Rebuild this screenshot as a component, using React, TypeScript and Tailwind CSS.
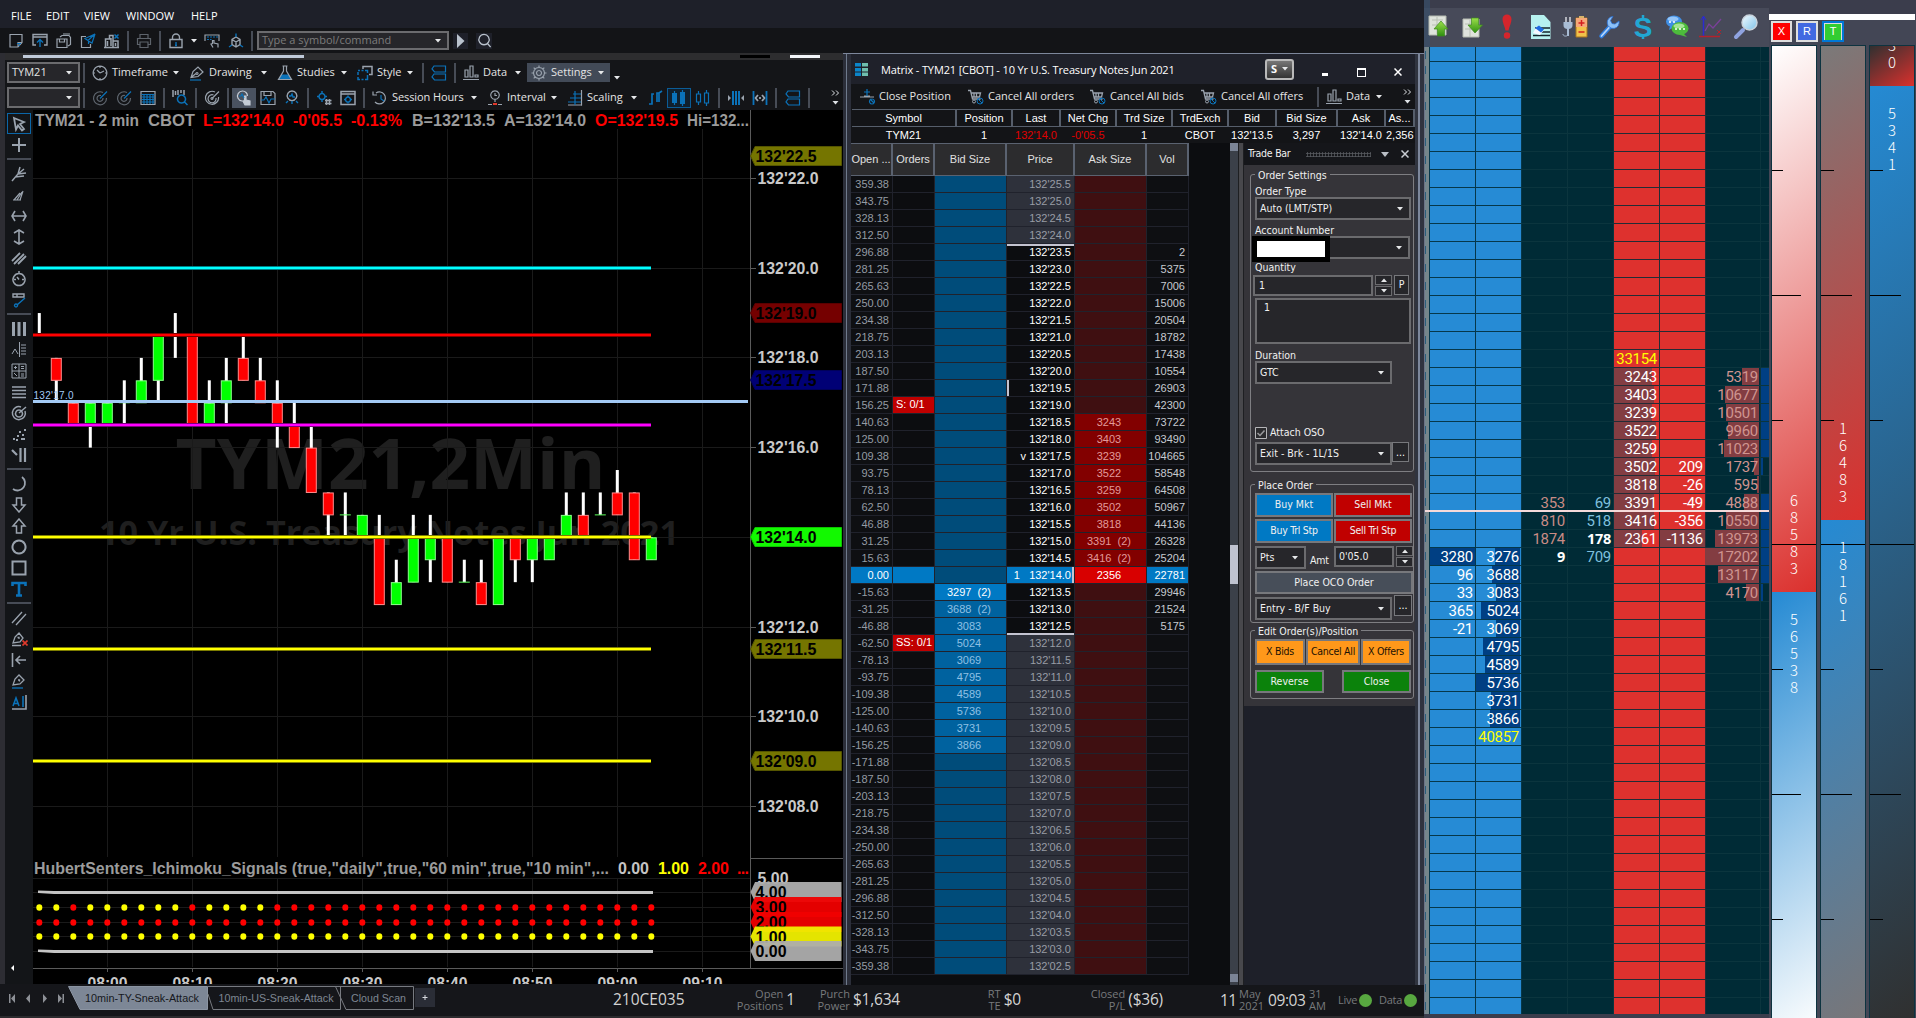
import type { ReactNode } from 'react';
import clsx from 'clsx';

const GRAY = '#9aa3ae';
const BLUE = '#0b72b9';

type IcoProps = { g?: string; b?: string; f?: string; ff?: string; s?: number; w?: number; c?: string };

// g = gray strokes, b = blue strokes, f = blue fill, ff = gray fill
const Ico = ({ g, b, f, ff, s = 16, w = 1.2, c = GRAY }: IcoProps) => (
  <svg width={s} height={s} viewBox="0 0 16 16" fill="none" strokeWidth={w} className="shrink-0">
    {ff && <path d={ff} fill={c} />}
    {f && <path d={f} fill={BLUE} />}
    {g && <path d={g} stroke={c} />}
    {b && <path d={b} stroke={BLUE} />}
  </svg>
);

const icons: Record<string, IcoProps> = {
  newDoc: { g: 'M2 1.500h12v8l-4 4.500H2z M14 9.500h-4v4', b: 'M9 10.500h4 M10.500 12.500h1.500' },
  open: { g: 'M4 12H1V1.500h14V12h-3 M1 4h14', b: 'M8 14V7 M5 9.500L8 6.500l3 3', w: 1.4 },
  saveAll: { g: 'M1 6h10v8.500H1z M3.500 6v3h5V6 M4 4l2-1.500h7l1.500 2v7L12 13 M7 1h7' },
  send: { g: 'M6 3.500H1.500v11h9V11', b: 'M15 1L5 5.500l3 2L15 1l-3 9-3.500-2v3' },
  building: { g: 'M1.500 14V6h4V2.500H9V14 M9 8h5v6 M0 14.500h15 M3.500 8v5 M7 5v8 M11.500 10v3', b: 'M10.500 1.500l4 4 M14.500 1.500l-4 4', w: 1.5 },
  print: { g: 'M4 5V1.500h8V5 M3.500 11.500h-2V5.500h13v6h-2 M4 9h8v5.500H4z', c: '#5d636b' },
  lock: { g: 'M2 6.500h12v8H2z M4.500 6.500V4.500a3.500 3.500 0 0 1 7 0v2', b: 'M8 9v1 M7 12.500h2 M8 9.500v3', w: 1.4 },
  keyboard: { g: 'M1 8V2h14v6 M9 14.500L7 11l1.500-.5V7.500h1.500V10l4 1v3.500', b: 'M3 4h2 M6 4h2 M9 4h2 M12 4h2 M3 6.500h2 M6 6.500h1.500' },
  cube: { g: 'M8 4l4 2.500v5L8 14l-4-2.500v-5z M4 6.500l4 2.500 4-2.500 M8 9v5', b: 'M8 4V0.500 M4 12l-3 2 M12 12l3 2', w: 1.4 },
  search: { g: 'M7.500 1.500a5.500 5.500 0 1 0 .01 0 M11.500 11.500l3 3.500', c: '#b9c2cd' },
  clock: { g: 'M8 1.200a6.800 6.800 0 1 0 .01 0 M8 8L5 5 M8 8l4-2 M8 1v2 M8 13v2 M1 8h2 M13 8h2' },
  pen: { g: 'M2 12.500L4 6.500 9 2l5 5-5 4.500z M8 7.500a1 1 0 1 0 .01 0 M2 12.500l5-4', b: 'M1 15h11' },
  flask: { g: 'M5.500 1h5 M6.500 1v5L1.500 14.500h13L9.500 6V1', f: 'M4.500 9.500h7l3 5h-13z' },
  style: { g: 'M6 4V1.500h9v8h-3', b: 'M1 5.500h2 M4.500 5.500h2 M8 5.500h2.500V8 M10.500 10v4.500H8 M6.500 14.500h-2 M3 14.500H1V12 M1 10V7', w: 1.5 },
  layers: { b: 'M3 1h11.500v6H3.500L1 4z M3 9h11.500v6H3.500L1 12z' },
  bars: { g: 'M2 5h3v7H2z M7 1h3v11H7z M12 10h3v2h-3z M0 14.500h16' },
  gear: { g: 'M8 5.500a2.500 2.500 0 1 0 .01 0 M8 2.500a5.500 5.500 0 1 0 .01 0 M8 .5v2 M8 13.500v2 M.5 8h2 M13.500 8h2 M2.700 2.700l1.500 1.500 M11.800 11.800l1.500 1.500 M13.300 2.700l-1.500 1.500 M2.700 13.300l1.500-1.500' },
  radar: { g: 'M11 2.500A6.500 6.500 0 1 0 14.500 8 M9 5.500A3 3 0 1 0 11 8', b: 'M8 8.500l7-7', c: '#5f666f' },
  table: { g: 'M1 1.500h14v13H1z', b: 'M1.500 4.500h13 M1.500 7h13 M1.500 9.500h13 M1.500 12h13 M4 4v10 M7 4v10 M10 4v10 M13 4v10' },
  barSearch: { g: 'M1 0v7 M3.500 1v4 M6 0v5 M9 0v3 M12 0v5', b: 'M9.500 5a4 4 0 1 0 .01 0 M12.500 12l3 3', w: 1.5 },
  target: { g: 'M11 2A6.500 6.500 0 1 0 14.500 7 M9.500 5A4 4 0 1 0 12 8 M8 8.500l7-7 M8 7.500a1 1 0 1 0 .01 0' },
  pointer: { g: 'M6.500 1a5 5 0 1 0 4 8 M11.500 6A5 5 0 0 0 6.500 1 M9 15l-2-4 1.500-.5V6h1.500v4l4 1v4z', ff: 'M9 15l-2-4 1.500-.5V6h1.500v4l4 1v4z', b: 'M3 6h2l1-2 2 4', c: '#c4ccd6' },
  diskWave: { g: 'M1 1.500h12l2 2v11H1z M4 1.500v4h7v-4', b: 'M1 10h3l2-3 3 6 2-4h4' },
  head: { g: 'M8 1a4.800 4.800 0 1 0 .01 0', b: 'M5 6h2l1-2 1 3h2 M4 11l-2 2 M12 11l2 2 M8 11v3', w: 1.4 },
  gearHash: { b: 'M6 3.500a3 3 0 1 0 .01 0 M6 1v2 M6 10v2 M1 6.500h2 M9 6.500h2', g: 'M10.500 9v6 M13.500 9v6 M9 10.500h6.500 M9 13.500h6.500', w: 1.5 },
  windowGear: { g: 'M1 1.500h14v13H1z M1 4h14', b: 'M8 7a2.500 2.500 0 1 0 .01 0 M8 5.500v2 M8 11.500v2 M4 9.500h2 M10 9.500h2', w: 1.5 },
  history: { g: 'M4 3a6 6 0 1 1-1 9 M1 1.500v3.500h4', b: 'M9 5v4l3 2' },
  interval: { g: 'M8 .8a4.300 4.300 0 1 0 .01 0 M8 3v2.500h2 M8 9.500V12 M1 14.500h4 M11 14.500h4' },
  scaling: { g: 'M14.500 0v15.500', b: 'M6 4h8 M3 8h11 M1 12h13 M8 1v14', ff: 'M1 14.500h14v1H1z' },
  notes: { b: 'M2 14h3V4h2 M10 12V3h2v9 M12 3l3-2', w: 1.7 },
  candles: { f: 'M1 3h5v10H1z M9 2h5v12H9z', b: 'M3.500 1v14 M11.500 0v16' },
  hollow: { b: 'M1.500 4h4v8h-4z M9.500 3h4v10h-4z M3.500 1v3 M3.500 12v3 M11.500 0v3 M11.500 13v3' },
  squeeze: { b: 'M5 1v14 M8 1v14 M11 1v14', ff: 'M0 5l3 3-3 3z M16 5l-3 3 3 3z', w: 2 },
  spread: { b: 'M1.500 1v14 M14.500 1v14', g: 'M6 5L3.500 8 6 11 M10 5l2.500 3-2.500 3 M8 7v2', w: 1.8 },
};

const sideIcons: (IcoProps | 'sep')[] = [
  { g: 'M3 2l10 4-4 2 4 5-2 1.500-4-5-2 4z', w: 1.8 },
  { g: 'M8 1v14 M1 8h14', w: 2 },
  'sep',
  { g: 'M1 15L7 8 9 1 M7 8l6-5 M7 8l8-1 M4 11l9-1', w: 1.5 },
  { g: 'M3 13L9 6 M6 13l5-8 M9 13l3-9 M2 13h8' },
  { g: 'M4 3L1 8l3 5 M12 3l3 5-3 5 M1 8h14', w: 1.6 },
  { g: 'M3 4l5-3 5 3 M3 12l5 3 5-3 M8 1v14', w: 1.6 },
  { g: 'M1 11L9 3 M3 14L13 4 M7 14l8-8', w: 1.8 },
  { g: 'M8 2.500a6 6 0 1 0 .01 0 M8 8.500L6 6 M8 0v2 M3 8.500h2 M11 8.500h2', w: 1.5 },
  { g: 'M2 2h11v3H2z M6 2v3', b: 'M14 6L6 13 M5 12a1.500 1.500 0 1 0 .01 0', w: 1.4 },
  'sep',
  { ff: 'M1 1h3v14H1z M6.500 1h3v14h-3z M12 1h3v14h-3z' },
  { g: 'M1 12l3-5 3 5 M8.500 0v15 M10 3h5 M10 6h5 M10 9h5 M10 12h5', w: 1 },
  { g: 'M1 1h14v14H1z M8 1v14 M1 8h14 M3 4.500h3 M4.500 3v3 M10 3.500h3 M10 5.500h3 M3 10l3 3 M10 11h3 M10 13h3', w: 1 },
  { g: 'M1 3h14 M1 6.500h14 M1 10h14 M1 13.500h14', w: 1.6 },
  { g: 'M10 2A6.500 6.500 0 1 0 14 6 M8 5a3.500 3.500 0 1 0 .01 0 M8 8l7-6', w: 1.5 },
  { ff: 'M2 12h2v2H2z M6 9h2v2H6z M5 13h2v2H5z M10 12h2v2h-2z M11 8h2v2h-2z M8 5h2v2H8z M13 3h2v2h-2z M12 12h2v2h-2z' },
  { g: 'M1 3l5 5 M9.500 1v14 M14 1v14', w: 2.2 },
  'sep',
  { g: 'M11 1a7 7 0 0 1-9 12', w: 1.8 },
  { g: 'M5.500 1h5v7H14l-6 7-6-7h3.500z', w: 1.5 },
  { g: 'M5.500 15h5V8H14L8 1 2 8h3.500z', w: 1.5 },
  { g: 'M8 1.500a6.500 6.500 0 1 0 .01 0', w: 2 },
  { g: 'M1.500 1.500h13v13h-13z', w: 2 },
  { b: 'M1.500 5V2h13v3 M8 2v12 M5 14.500h6', w: 2.6 },
  'sep',
  { g: 'M1 13L11 2 M5 15L15 4', w: 1.3 },
  { g: 'M2 12l2-6 4-4 4 5-3 4z M6.500 6.500h1.500v1.500 M1 14.500h9', w: 1.3 },
  { g: 'M1.500 1v14 M5 8h10 M9 4L5 8l4 4', w: 1.6 },
  { g: 'M2 12l2-6 4-4 5 5-4 4z M7 7h1.500v1.500', b: 'M1 15h11', w: 1.3 },
  { g: 'M1 15h14V1', b: 'M2 12L5 4l3 8 M3 9.500h4 M12 2v11', w: 1.6 },
];

// index of the tool that carries a red delete mark
const REMOVE_TOOL = 27;

const Caret = ({ className = '' }: { className?: string }) => (
  <svg width="6" height="4" viewBox="0 0 6 4" className={clsx('shrink-0', className)}>
    <path d="M0 0h6L3 3.500z" fill="#e6e8ea" />
  </svg>
);

const Sep = () => (
  <div className="flex w-2 shrink-0 justify-center">
    <div className="h-5 w-[2px] bg-[#474c56]" />
  </div>
);

const IconCell = ({ name, className = '' }: { name: string; className?: string }) => (
  <div className={clsx('flex h-5 w-6 shrink-0 items-center justify-center', className)}>
    <Ico {...icons[name]} />
  </div>
);

const MenuButton = ({ name, label, className }: { name: string; label: string; className: string }) => (
  <div className={clsx('flex h-[19px] shrink-0 items-center', className)}>
    <IconCell name={name} />
    <span className="grow whitespace-nowrap">{label}</span>
    <Caret className="mr-[6px]" />
  </div>
);

const Combo = ({ children, className }: { children?: ReactNode; className: string }) => (
  <div className={clsx('flex shrink-0 items-center justify-between border-2 border-[#6b6b6e] bg-[#26262a] pr-[6px] pl-[3px] whitespace-nowrap', className)}>
    <span>{children}</span>
    <Caret />
  </div>
);

const TopBar = () => (
  <div className="h-[54px] w-[1424px] bg-[#131417]">
    <div className="flex h-7 items-end bg-[#1e2029] pb-[3px] pl-[11px] font-['Open_Sans'] text-[11px] leading-[18px] text-white">
      <span className="w-[35px]">FILE</span>
      <span className="w-[38px]">EDIT</span>
      <span className="w-[42px]">VIEW</span>
      <span className="w-[65px]">WINDOW</span>
      <span>HELP</span>
    </div>
    <div className="flex h-[25px] items-center pl-1">
      {['newDoc', 'open', 'saveAll', 'send', 'building'].map((n) => (
        <IconCell key={n} name={n} />
      ))}
      <Sep />
      <IconCell name="print" />
      <Sep />
      <IconCell name="lock" />
      <Caret className="mx-[3px]" />
      <IconCell name="keyboard" />
      <IconCell name="cube" />
      <Sep />
      <Combo className="ml-px h-[19px] w-[192px] font-['Open_Sans'] text-[11px] text-[#7c7c7c]">Type a symbol/command</Combo>
      <div className="ml-1 flex h-4 w-[15px] items-center justify-center bg-[#1e2029]">
        <svg width="8" height="14" viewBox="0 0 8 14">
          <path d="M0 0l7.500 7L0 14z" fill="#b9c2cd" />
        </svg>
      </div>
      <div className="ml-2 flex h-4 w-4 items-center justify-center bg-[#1e2029]">
        <Ico {...icons.search} s={15} w={1.4} />
      </div>
    </div>
  </div>
);

const Overflow = ({ className = '' }: { className?: string }) => (
  <svg width="9" height="17" viewBox="0 0 9 17" className={className}>
    <path d="M1 1.500l2.500 2.500L1 6.500 M5 1.500l2.500 2.500L5 6.500" stroke="#dfe2e6" fill="none" />
    <path d="M1.500 12h6l-3 3.500z" fill="#dfe2e6" />
  </svg>
);

const ChartToolbars = () => (
  <div className="h-[50px] bg-[#141518] pl-[2px] font-['Open_Sans'] text-[11px] text-[#e4e4e4]">
    <div className="flex h-[25px] items-center">
      <Combo className="h-[21px] w-[73px]">TYM21</Combo>
      <Sep />
      <MenuButton name="clock" label="Timeframe" className="w-[97px]" />
      <MenuButton name="pen" label="Drawing" className="w-[88px]" />
      <MenuButton name="flask" label="Studies" className="w-[80px]" />
      <MenuButton name="style" label="Style" className="w-[66px]" />
      <Sep />
      <IconCell name="layers" />
      <Sep />
      <MenuButton name="bars" label="Data" className="w-[68px]" />
      <MenuButton name="gear" label="Settings" className="w-[83px] bg-[#424a57]" />
      <Caret className="mt-[10px] ml-1" />
    </div>
    <div className="flex h-[25px] items-center">
      <Combo className="h-[21px] w-[73px]" />
      <Sep />
      <IconCell name="radar" />
      <IconCell name="radar" />
      <IconCell name="table" />
      <Sep />
      <IconCell name="barSearch" />
      <Sep />
      <IconCell name="target" />
      <Sep />
      <IconCell name="pointer" className="bg-[#4a5260]" />
      <IconCell name="diskWave" />
      <IconCell name="head" />
      <Sep />
      <IconCell name="gearHash" />
      <IconCell name="windowGear" />
      <Sep />
      <MenuButton name="history" label="Session Hours" className="w-[115px] tracking-[-0.1px]" />
      <div className="relative">
        <MenuButton name="interval" label="Interval" className="w-[80px]" />
        <div className="absolute top-[15px] left-[10px] h-[2px] w-1 bg-[#e0392b]" />
      </div>
      <MenuButton name="scaling" label="Scaling" className="w-[80px]" />
      <IconCell name="notes" />
      <IconCell name="candles" className="border border-[#0b5c96] bg-[#10202e]" />
      <IconCell name="hollow" />
      <Sep />
      <IconCell name="squeeze" className="ml-px" />
      <IconCell name="spread" />
      <Sep />
      <IconCell name="layers" className="ml-px" />
      <Sep />
      <Overflow className="ml-[18px]" />
    </div>
  </div>
);

const SideTools = () => (
  <div className="flex w-7 shrink-0 flex-col items-center bg-[#131518] pt-[3px]">
    {sideIcons.map((ic, i) =>
      ic === 'sep' ? (
        <div key={i} className="my-[3px] h-[2px] w-6 shrink-0 bg-[#474c56]" />
      ) : (
        <div key={i} className={clsx('relative flex h-[21px] w-6 shrink-0 items-center justify-center', i === 0 && 'border border-[#0b66a8]')}>
          <Ico {...ic} />
          {i === REMOVE_TOOL && (
            <svg width="6" height="6" viewBox="0 0 6 6" className="absolute right-[3px] bottom-[3px]">
              <path d="M.5.5l5 5M5.500.5l-5 5" stroke="#e0392b" strokeWidth="1.600" />
            </svg>
          )}
        </div>
      ),
    )}
    <svg width="4" height="6" className="mt-auto mr-[13px] mb-[13px]">
      <path d="M3 0v6L0 3z" fill="#fff" />
    </svg>
  </div>
);

// body top, body bottom, wick high, wick low (32nds above 132), rising
const candles: [number, number, number, number, boolean][] = [
  [18.5, 18.5, 19, 18.5, false],
  [18, 17.5, 18, 17, false],
  [17, 16.5, 17, 16.5, false],
  [17, 16.5, 17, 16, true],
  [17, 16.5, 17, 16.5, true],
  [17, 17, 17.5, 16.5, true],
  [17.5, 17, 18, 17, true],
  [18.5, 17.5, 18.5, 17, true],
  [18.5, 18.5, 19, 18, true],
  [18.5, 16.5, 18.5, 16.5, false],
  [17, 16.5, 17.5, 16.5, true],
  [17.5, 17, 18, 16.5, true],
  [18, 17.5, 18.5, 17.5, false],
  [17.5, 17, 18, 17, false],
  [17, 16.5, 17.5, 16, false],
  [16.5, 16, 17, 16, false],
  [16, 15, 16.5, 15, false],
  [15, 14.5, 15, 14, false],
  [14.5, 14.5, 15, 14, true],
  [14.5, 14, 14.5, 14, true],
  [14, 12.5, 14.5, 12.5, false],
  [13, 12.5, 13.5, 12.5, true],
  [14, 13, 14.5, 13, true],
  [14, 13.5, 14.5, 13, true],
  [14, 13, 14, 13, false],
  [13, 13, 13.5, 13, true],
  [13, 12.5, 13.5, 12.5, false],
  [14, 12.5, 14, 12.5, true],
  [14, 13.5, 14, 13, false],
  [14, 13.5, 14, 13, true],
  [14, 13.5, 14, 13.5, true],
  [14.5, 14, 15, 14, true],
  [14.5, 14, 15, 14, false],
  [14.5, 14.5, 15, 14.5, true],
  [15, 14.5, 15.5, 14.5, false],
  [15, 13.5, 15, 13.5, false],
  [14, 13.5, 14, 13.5, true],
];

const py = (p: number) => 178.5 + (22 - p) * 44.85;
const cx = (i: number) => 39.3 + i * 17;
const fmt = (p: number) => `132'${p.toFixed(1).padStart(4, '0')}`;

const levels: [number, string, string][] = [
  [268, '#00ffff', '#007f86'],
  [335, '#ff0000', '#7d0000'],
  [425, '#ff00ff', '#7d007d'],
  [537, '#ffff00', '#7d7d00'],
  [649, '#ffff00', '#7d7d00'],
  [761, '#ffff00', '#7d7d00'],
];

const tags: [number, string, string, string][] = [
  [156, '#757500', '#555500', fmt(22.5)],
  [313, '#750000', '#5a0000', fmt(19)],
  [380, '#000075', '#00005a', fmt(17.5)],
  [537, '#12f900', '#0dc400', fmt(14)],
  [649, '#757500', '#555500', fmt(11.5)],
  [761, '#757500', '#555500', fmt(9)],
];

const lowTags: [number, string, string][] = [
  [892, '#adadad', '4.00'],
  [907, '#f00000', '3.00'],
  [922, '#f00000', '2.00'],
  [936.5, '#f0f000', '1.00'],
  [951, '#adadad', '0.00'],
];

const headerParts: [number, number, string, string][] = [
  [35, 104, '#9b9b9b', 'TYM21 - 2 min'],
  [148, 47, '#9b9b9b', 'CBOT'],
  [203, 81, '#ff0000', "L=132'14.0"],
  [293, 49, '#ff0000', "-0'05.5"],
  [351, 51, '#ff0000', '-0.13%'],
  [412, 83, '#9b9b9b', "B=132'13.5"],
  [504, 82, '#9b9b9b', "A=132'14.0"],
  [595, 83, '#ff0000', "O=132'19.5"],
  [687, 62, '#9b9b9b', 'Hi=132...'],
];

const times = ['08:00', '08:10', '08:20', '08:30', '08:40', '08:50', '09:00', '09:10'];

const Chart = () => (
  <svg width="810" height="874" viewBox="33 110 810 874" className="block bg-black" fontFamily="'Liberation Sans', Arial, sans-serif">
    <g fontFamily="'Open Sans', 'Noto Sans', sans-serif" fontWeight="700" fill="#1f1f1f">
      <text x="175.500" y="489" fontSize="70" textLength="430" lengthAdjust="spacingAndGlyphs">TYM21,2Min</text>
      <text x="99" y="545" fontSize="34" textLength="580" lengthAdjust="spacingAndGlyphs">10 Yr U.S. Treasury Notes Jun 2021</text>
    </g>
    <g stroke="#1a1a1a" shapeRendering="crispEdges">
      {times.map((t, i) => (
        <path key={t} d={`M${107.5 + i * 85} 129V857 M${107.5 + i * 85} 878V967`} />
      ))}
      {[22, 20, 18, 16, 14, 12, 10, 8].map((p) => (
        <path key={p} d={`M33 ${py(p)}H750`} />
      ))}
      {[878.5, 892.5, 907.5, 922.5, 936.5, 951.5].map((y) => (
        <path key={y} d={`M33 ${y}H750`} />
      ))}
    </g>
    {candles.map(([top, bottom, hi, lo, up], i) => (
      <g key={i}>
        {hi !== lo && <rect x={cx(i) - 1.5} y={py(hi)} width="3" height={py(lo) - py(hi)} fill="#fff" />}
        {top === bottom ? (
          <rect x={cx(i) - 5.5} y={py(top) - 0.5} width="11" height="1" fill={up ? '#5dff5d' : '#ff0000'} />
        ) : (
          <rect
            x={cx(i) - 5}
            y={py(top) + 0.5}
            width="10"
            height={py(bottom) - py(top) - 0.5}
            fill={up ? '#00ff00' : '#ff0000'}
            stroke={up ? '#8dff8d' : '#ff8d8d'}
          />
        )}
      </g>
    ))}
    {levels.map(([y, color, edge]) => (
      <g key={y}>
        <rect x="33" y={y - 2} width="618" height="4" fill={edge} />
        <rect x="33" y={y - 1} width="618" height="2" fill={color} />
      </g>
    ))}
    <rect x="33" y="400" width="715" height="3" fill="#a3caf5" />
    <text x="33.500" y="398.500" fontSize="10" textLength="40" fill="#a3caf5">132'17.0</text>

    <g fontWeight="700" fontSize="16">
      {headerParts.map(([x, w, color, text]) => (
        <text key={x} x={x} y="126" textLength={w} lengthAdjust="spacingAndGlyphs" fill={color}>{text}</text>
      ))}
      <text x="34" y="874" textLength="575" lengthAdjust="spacingAndGlyphs" fill="#9b9b9b">{'HubertSenters_Ichimoku_Signals (true,"daily",true,"60 min",true,"10 min",...'}</text>
      <text x="618" y="874" textLength="31" fill="#c4c4c4">0.00</text>
      <text x="658" y="874" textLength="31" fill="#ffff00">1.00</text>
      <text x="698" y="874" textLength="31" fill="#ff0000">2.00</text>
      <text x="737" y="874" textLength="12" fill="#ff0000">...</text>
    </g>

    {candles.map((_, i) => (
      <g key={i}>
        <ellipse cx={cx(i)} cy="907.500" rx="3" ry="3.200" fill={i < 14 && i !== 2 && i !== 9 ? '#ffff00' : '#ff0000'} />
        <ellipse cx={cx(i)} cy="922.500" rx="3" ry="3.200" fill="#ff0000" />
        <ellipse cx={cx(i)} cy="936.500" rx="3" ry="3.200" fill="#ffff00" />
      </g>
    ))}
    <path d="M38 890.500l16 .5H653v3H54L38 893z" fill="#c4c4c4" />
    <path d="M38 949.500l16 .5H653v3H54L38 952z" fill="#c4c4c4" />

    <g stroke="#5a5a5a" shapeRendering="crispEdges">
      <path d="M750.500 110V968 M33 968.500H843 M750 858.500H843" />
      {times.map((t, i) => (
        <path key={t} d={`M${107.5 + i * 85} 968v4`} />
      ))}
    </g>
    <g fontWeight="700" fontSize="16" fill="#c9c9c9">
      {times.map((t, i) => (
        <text key={t} x={107.5 + i * 85} y="988.500" textAnchor="middle" textLength="40" lengthAdjust="spacingAndGlyphs">{t}</text>
      ))}
      {[22, 20, 18, 16, 12, 10, 8].map((p) => (
        <g key={p}>
          <path d={`M750 ${py(p)}h6`} stroke="#5a5a5a" shapeRendering="crispEdges" />
          <text x="757.500" y={py(p) + 5.5} textLength="61" lengthAdjust="spacingAndGlyphs">{fmt(p)}</text>
        </g>
      ))}
      <text x="757.500" y="884" textLength="31" lengthAdjust="spacingAndGlyphs">5.00</text>
    </g>
    <g fontWeight="700" fontSize="16" fill="#000">
      {tags.map(([y, fill, edge, text]) => (
        <g key={y}>
          <path d={`M750.5 ${y}L755 ${y - 9.5}H841.5V${y + 9.5}H755z`} fill={fill} stroke={edge} />
          <text x="755.500" y={y + 6} textLength="61" lengthAdjust="spacingAndGlyphs">{text}</text>
        </g>
      ))}
      {lowTags.map(([y, fill, text]) => (
        <g key={y}>
          <path d={`M750.5 ${y}L755 ${y - 10}H841.5V${y + 10}H755z`} fill={fill} fillOpacity="0.95" />
          <text x="755.500" y={y + 6} textLength="31" lengthAdjust="spacingAndGlyphs">{text}</text>
        </g>
      ))}
    </g>
  </svg>
);

const summary: [string, string, string, string?][] = [
  ['Symbol', 'TYM21', 'w-[105px]'],
  ['Position', '1', 'w-[56px]'],
  ['Last', "132'14.0", 'w-[48px]', 'text-[#e00000]'],
  ['Net Chg', "-0'05.5", 'w-[56px]', 'text-[#e00000]'],
  ['Trd Size', '1', 'w-[56px]'],
  ['TrdExch', 'CBOT', 'w-[56px]'],
  ['Bid', "132'13.5", 'w-[48px]'],
  ['Bid Size', '3,297', 'w-[61px]'],
  ['Ask', "132'14.0", 'w-[48px]'],
  ['As...', '2,356', 'w-[29px]'],
];

const vols = [2, 5375, 7006, 15006, 20504, 18782, 17438, 10554, 26903, 42300, 73722, 93490, 104665, 58548, 64508, 50967, 44136, 26328, 25204, 22781, 29946, 21524, 5175];
const asks = ['3243', '3403', '3239', '3522', '3259', '3502', '3818', '3391  (2)', '3416  (2)', '2356'];
const bids = ['3297  (2)', '3688  (2)', '3083', '5024', '3069', '4795', '4589', '5736', '3731', '3866'];

const LADDER_COLS = 'grid grid-cols-[42px_42px_72px_68px_72px_42px]';
const CELL = 'border-r border-b border-[#20222c]';

const LadderRow = ({ i }: { i: number }) => {
  const last = i === 23;
  const inRange = i >= 4 && i <= 26;
  const order = i === 13 ? 'S: 0/1' : i === 27 ? 'SS: 0/1' : '';
  const ask = asks[i - 14];
  const bid = bids[i - 24];
  return (
    <div className={clsx(LADDER_COLS, 'h-[17px] text-[11px] leading-4 whitespace-pre')}>
      <div className={clsx(CELL, 'pr-[3px] text-right', last ? 'bg-[#0079c4] text-white' : 'bg-[#0e0f12] text-[#949ba3]')}>
        {(359.375 - i * 15.625).toFixed(2)}
      </div>
      <div className={clsx(CELL, 'pl-[3px] text-white', order ? 'bg-[#c00000] leading-[14px]' : last ? 'bg-[#0079c4]' : 'bg-[#0c0d10]')}>{order}</div>
      <div
        className={clsx(
          CELL,
          'pr-[3px] text-center',
          i === 24 ? 'bg-[#0079c4] text-white' : bid ? 'bg-[#00629f] text-[#8fc0e4]' : 'bg-[#004c7a]',
        )}
      >
        {bid}
      </div>
      <div
        className={clsx(
          CELL,
          'relative pr-[3px] text-right',
          last ? 'bg-[#0079c4] text-white' : inRange ? 'bg-[#0c0d10] text-white' : 'bg-[#2e313b] text-[#989ca5]',
        )}
      >
        {i === 16 && 'v '}
        {last && '1   '}
        {fmt(25.5 - i * 0.5)}
        {i === 4 && <div className="absolute inset-x-0 top-0 h-[2px] bg-[#c3c3d0]" />}
        {i === 26 && <div className="absolute inset-x-0 -bottom-px h-[2px] bg-[#c3c3d0]" />}
        {i === 12 && <div className="absolute inset-y-0 left-0 w-[2px] bg-[#c3c3d0]" />}
        {last && <div className="absolute inset-y-0 right-0 w-[2px] bg-[#c3c3d0]" />}
      </div>
      <div className={clsx(CELL, 'pr-[3px] text-center', last ? 'bg-[#d80000] text-white' : ask ? 'bg-[#820000] text-[#e39a9a]' : 'bg-[#3f0f11]')}>{ask}</div>
      <div className={clsx(CELL, 'pr-[3px] text-right', last ? 'bg-[#0079c4] text-white' : 'bg-[#0e0f12] text-[#c6cad0]')}>{vols[i - 4]}</div>
    </div>
  );
};

const Ladder = () => (
  <div className="w-[379px] bg-[#0c0d10] font-['Liberation_Sans']">
    <div className={clsx(LADDER_COLS, 'h-[33px] w-[338px] border-t border-l border-[#5a6270] text-[11px] text-[#e0e0e0]')}>
      {['Open ...', 'Orders', 'Bid Size', 'Price', 'Ask Size', 'Vol'].map((h) => (
        <div key={h} className="-ml-px mr-px flex items-center justify-center border-r-2 border-b border-[#5a6270] bg-[#2c2c2e] pb-px whitespace-nowrap">
          {h}
        </div>
      ))}
    </div>
    {Array.from({ length: 47 }, (_, i) => (
      <LadderRow key={i} i={i} />
    ))}
  </div>
);

const Group = ({ title, className, children }: { title: string; className: string; children: ReactNode }) => (
  <div className={clsx('relative w-[164px] rounded-[3px] border border-[#7e7e82] pl-1', className)}>
    <span className="absolute -top-[7px] left-[4px] bg-[#353439] px-[3px] leading-[15px]">{title}</span>
    {children}
  </div>
);

const Spinner = ({ className }: { className: string }) => (
  <div className={clsx('flex w-[17px] flex-col gap-px', className)}>
    <div className="flex h-[10px] items-center justify-center border border-[#6b6b6e] bg-[#26262a]">
      <Caret className="rotate-180" />
    </div>
    <div className="flex h-[10px] items-center justify-center border border-[#6b6b6e] bg-[#26262a]">
      <Caret />
    </div>
  </div>
);

const btn = 'flex items-center justify-center border-2 border-[#77787c] whitespace-nowrap';
const label = 'h-3 leading-[12px]';
const field = 'border-2 border-[#6b6b6e] bg-[#26262a]';

const Dots = ({ className }: { className: string }) => (
  <div className={clsx('flex items-center justify-center border border-[#77787c] bg-[#26262a] pt-px text-white', className)}>...</div>
);

const TradeBar = () => (
  <div className="w-[171px] bg-[#1e2029] font-['DejaVu_Sans_Condensed','DejaVu_Sans'] text-[10.5px] text-[#f0f0f0]">
    <div className="flex h-[22px] items-center bg-[#15161a] pl-1">
      <span className="w-[58px] tracking-tight">Trade Bar</span>
      <div className="h-[5px] w-[65px] bg-[radial-gradient(#55585d_45%,transparent_55%)] bg-[length:3px_3px]" />
      <svg width="8" height="5" className="ml-[10px]">
        <path d="M0 0h8L4 5z" fill="#b9bec5" />
      </svg>
      <svg width="8" height="8" viewBox="0 0 8 8" className="ml-3">
        <path d="M.5.5l7 7M7.500.5l-7 7" stroke="#c8ccd2" strokeWidth="1.500" />
      </svg>
    </div>
    <div className="h-[541px] bg-[#353439] pt-[9px] pl-[6px]">
      <Group title="Order Settings" className="h-[298px] pt-[10px]">
        <div className={label}>Order Type</div>
        <Combo className="h-[23px] w-[156px]">Auto (LMT/STP)</Combo>
        <div className={clsx(label, 'mt-1')}>Account Number</div>
        <div className="-ml-[3px] flex h-[23px]">
          <div className="z-10 h-[26px] w-[78px] shrink-0 border-[5px] border-black bg-white" />
          <Combo className="-ml-[2px] h-[23px] w-[82px]" />
        </div>
        <div className={clsx(label, 'mt-[2px]')}>Quantity</div>
        <div className="mt-[2px] -ml-[2px] flex h-[21px] gap-[2px]">
          <div className={clsx(field, 'h-[21px] w-[120px] pl-1 leading-[17px]')}>1</div>
          <Spinner className="" />
          <div className="flex h-5 w-[15px] items-center justify-center border border-[#77787c] bg-[#26262a]">P</div>
        </div>
        <div className={clsx(field, 'mt-[2px] h-[46px] w-[156px] pl-[7px] leading-[14px]')}>1</div>
        <div className={clsx(label, 'mt-[5px]')}>Duration</div>
        <Combo className="h-[23px] w-[137px]">GTC</Combo>
        <div className="mt-[42px] flex h-[13px] items-center gap-[3px]">
          <svg width="12" height="12" viewBox="0 0 12 12">
            <path d="M.5.5h11v11H.5z" fill="#2b2b2e" stroke="#b5b5b8" />
            <path d="M2.500 6l2.500 2.500L9.500 3.500" fill="none" stroke="#9a9a9d" strokeWidth="1.500" />
          </svg>
          Attach OSO
        </div>
        <div className="mt-[3px] flex">
          <Combo className="h-[23px] w-[137px]">Exit - Brk - 1L/1S</Combo>
          <Dots className="h-5 w-[17px]" />
        </div>
      </Group>
      <Group title="Place Order" className="mt-3 h-[139px] pt-2">
        <div className="grid w-[157px] grid-cols-2 gap-x-px gap-y-[2px]">
          <div className={clsx(btn, 'h-6 bg-[#0079c4]')}>Buy Mkt</div>
          <div className={clsx(btn, 'h-6 bg-[#c00000]')}>Sell Mkt</div>
          <div className={clsx(btn, 'h-6 bg-[#0079c4] tracking-tight')}>Buy Trl Stp</div>
          <div className={clsx(btn, 'h-6 bg-[#c00000] tracking-tight')}>Sell Trl Stp</div>
        </div>
        <div className="mt-[3px] flex">
          <Combo className="h-[23px] w-[51px]">Pts</Combo>
          <span className="w-7 pt-[7px] pl-1 tracking-tight">Amt</span>
          <div className={clsx(field, 'h-[21px] w-[60px] pl-[3px] leading-[16px]')}>0'05.0</div>
          <Spinner className="ml-[2px]" />
        </div>
        <div className={clsx(btn, 'mt-[2px] h-[23px] w-[158px] bg-[#474e59]')}>Place OCO Order</div>
        <div className="mt-[3px] flex">
          <Combo className="h-[23px] w-[137px]">Entry - B/F Buy</Combo>
          <Dots className="-mt-[2px] ml-[2px] h-[21px] w-[18px]" />
        </div>
      </Group>
      <Group title="Edit Order(s)/Position" className="mt-[7px] h-[69px] pt-2">
        <div className="flex gap-px tracking-tight text-[#1c1204]">
          <div className={clsx(btn, 'h-[26px] w-[50px] bg-[#ff981a]')}>X Bids</div>
          <div className={clsx(btn, 'h-[26px] w-[54px] bg-[#ff981a]')}>Cancel All</div>
          <div className={clsx(btn, 'h-[26px] w-[50px] bg-[#ff981a]')}>X Offers</div>
        </div>
        <div className="mt-[5px] flex gap-[18px]">
          <div className={clsx(btn, 'h-[23px] w-[69px] bg-[#0b820b]')}>Reverse</div>
          <div className={clsx(btn, 'h-[23px] w-[69px] bg-[#0b820b]')}>Close</div>
        </div>
      </Group>
    </div>
  </div>
);

const CartIcon = () => (
  <svg width="16" height="16" viewBox="0 0 16 16" fill="none" className="shrink-0">
    <path d="M0 1.500h2.500l2 8.500h8 M3.500 4h9l-1 4H4.500 M6 4v4 M8.500 4v4" stroke={GRAY} strokeWidth="1.300" />
    <circle cx="6" cy="12.500" r="1.500" stroke={GRAY} />
    <circle cx="12" cy="12" r="3" stroke={BLUE} />
    <path d="M10 10l4 4" stroke={BLUE} />
  </svg>
);

const Matrix = () => (
  <div className="w-[581px] border-t border-[#7d879b] bg-[#2b2e39]">
    <div className="flex h-[931px]">
      <div className="w-2 shrink-0 border-r-4 border-l-[3px] border-[#2b2e39] bg-[#6f7a8c]" />
      <div className="flex w-[564px] shrink-0 flex-col">
        <div className="flex h-[30px] shrink-0 items-center bg-[#1f212a] pl-1 font-['Open_Sans'] text-[11px] text-white">
          <svg width="13" height="13" viewBox="0 0 13 13">
            <path d="M0 0h6v3.500H0z M0 5h6v3.500H0z M0 9.500h6V13H0z" fill="#0b85c9" />
            <path d="M7 0h6v3.500H7z M7 5h6v3.500H7z M7 9.500h6V13H7z" fill="#6fbfae" />
          </svg>
          <span className="ml-[13px] w-[384px] pt-[2px] tracking-[-0.14px] whitespace-nowrap">Matrix - TYM21 [CBOT] - 10 Yr U.S. Treasury Notes Jun 2021</span>
          <div className="flex h-[21px] w-[29px] items-center justify-center gap-[5px] rounded-[3px] border-2 border-[#b9b9b9] bg-linear-to-b from-[#777] to-[#333] font-bold">
            S
            <Caret />
          </div>
          <div className="mt-[11px] ml-[28px] h-[3px] w-[6px] bg-white" />
          <div className="mt-[6px] ml-[29px] h-[9px] w-[9px] border border-t-2 border-white" />
          <svg width="8" height="8" viewBox="0 0 8 8" className="mt-[6px] ml-[28px]">
            <path d="M.5.5l7 7M7.500.5l-7 7" stroke="#fff" strokeWidth="1.500" />
          </svg>
        </div>
        <div className="flex h-[25px] shrink-0 items-center bg-[#141518] pl-[9px] font-['Open_Sans'] text-[11px] whitespace-nowrap text-[#e4e4e4]">
          <Ico g="M0 8h14 M4 7h6" b="M7 0v7 M4 3h6 M12 10a2.500 2.500 0 1 0 .01 0 M10 10l4 4" />
          <span className="ml-[3px] w-[89px]">Close Position</span>
          <CartIcon />
          <span className="ml-1 w-[102px]">Cancel All orders</span>
          <CartIcon />
          <span className="ml-1 w-[91px]">Cancel All bids</span>
          <CartIcon />
          <span className="ml-1 w-[93px]">Cancel All offers</span>
          <Sep />
          <MenuButton name="bars" label="Data" className="w-[66px]" />
          <Overflow className="ml-[15px]" />
        </div>
        <div className="flex h-[34px] shrink-0 bg-[#131417] pl-px font-['Liberation_Sans'] text-[11px] text-white">
          {summary.map(([head, value, width, color], i) => (
            <div key={i} className={clsx('flex shrink-0 flex-col text-center whitespace-nowrap', width)}>
              <div className="h-[18px] border-y border-r-2 border-[#565e6b] leading-4">{head}</div>
              <div className={clsx('pr-[2px] leading-4', color)}>{value}</div>
            </div>
          ))}
        </div>
        <div className="flex grow">
          <Ladder />
          <div className="flex w-2 flex-col bg-[#3b4049]">
            <div className="h-2 bg-[#7b8496]" />
            <div className="mt-[394px] h-[39px] bg-[#bfc3d0]" />
            <div className="mt-auto mb-[3px] h-2 bg-[#7b8496]" />
          </div>
          <div className="w-[6px] border-x-[1.5px] border-[#1e1f22] bg-[#48484c]" />
          <TradeBar />
        </div>
      </div>
      <div className="w-[9px] border-r-4 border-l-[3px] border-[#30343f] bg-[#7d879b]" />
    </div>
  </div>
);

const Pair = ({ a, b, value, className }: { a: string; b: string; value: string; className: string }) => (
  <div className={clsx('flex shrink-0 items-center justify-end gap-[3px]', className)}>
    <div className="text-right text-[11px] leading-[12px] text-[#787a7d]">
      {a}
      <br />
      {b}
    </div>
    <span className="text-[15.5px] tracking-[-0.2px] text-[#d3d3d3]">{value}</span>
  </div>
);

const StatusBar = () => (
  <div className="flex h-[34px] w-[1424px] border-b-2 border-[#2c2b2e] bg-[#15161a] font-['Open_Sans']">
    <svg width="440" height="32" viewBox="0 984 440 32" className="shrink-0" fontFamily="'Liberation Sans', Arial" fontSize="11">
      <g fill="#8d9096">
        <path d="M9 994h1.500v9H9z M15 994v9l-4-4.500z M30 994v9l-4-4.500z M43 994v9l4-4.500z M58 994v9l4-4.500z M62.500 994H64v9h-1.500z" />
      </g>
      <path d="M68.500 986.500H207.500V1009.500H80z" fill="#7d8796" stroke="#8b94a2" />
      <path d="M207.500 986.500H340.500V1009.500H213L208 994 M335.500 986.500H413.500V1009.500H346z" fill="none" stroke="#777a80" />
      <text x="85" y="1002" textLength="114" lengthAdjust="spacingAndGlyphs" fill="#16181c">10min-TY-Sneak-Attack</text>
      <text x="218.500" y="1002" textLength="115" lengthAdjust="spacingAndGlyphs" fill="#7f8793">10min-US-Sneak-Attack</text>
      <text x="351" y="1002" textLength="55" lengthAdjust="spacingAndGlyphs" fill="#7f8793">Cloud Scan</text>
      <path d="M415 988h20v19h-20z" fill="#2a2d36" />
      <path d="M425 995v5 M422.500 997.500h5" stroke="#d8dbe0" />
    </svg>
    <span className="w-[245px] pl-[173px] text-[15.5px] leading-[31px] text-[#d3d3d3]">210CE035</span>
    <Pair a="Open" b="Positions" value="1" className="w-[110px]" />
    <Pair a="Purch" b="Power" value="$1,634" className="w-[105px]" />
    <Pair a="RT" b="TE" value="$0" className="w-[121px]" />
    <Pair a="Closed" b="P/L" value="($36)" className="w-[142px]" />
    <div className="flex items-center gap-[3px] pl-[57px] text-[11px] leading-[12px] whitespace-nowrap text-[#787a7d]">
      <span className="w-4 text-[15.5px] tracking-[-0.5px] text-[#d3d3d3]">11</span>
      <span className="w-[26px]">May<br />2021</span>
      <span className="w-[38px] text-[15.5px] tracking-[-0.4px] text-[#d3d3d3]">09:03</span>
      <span className="w-[26px]">31<br />AM</span>
      <span className="w-[18px] tracking-tight">Live</span>
      <div className="h-[13px] w-[13px] rounded-full bg-[#58a840]" />
      <span className="ml-1 w-[22px] tracking-tight">Data</span>
      <div className="h-[13px] w-[13px] rounded-full bg-[#58a840]" />
    </div>
  </div>
);

type DomRow = { b1?: string; b2?: number; s?: string; r?: string; a1?: number; a2?: string; v?: number };

const domRows: Record<number, DomRow> = {
  18: { a1: 3243, v: 5319 },
  19: { a1: 3403, v: 10677 },
  20: { a1: 3239, v: 10501 },
  21: { a1: 3522, v: 9960 },
  22: { a1: 3259, v: 11023 },
  23: { a1: 3502, a2: '209', v: 1737 },
  24: { a1: 3818, a2: '-26', v: 595 },
  25: { s: '353', r: '69', a1: 3391, a2: '-49', v: 4888 },
  26: { s: '810', r: '518', a1: 3416, a2: '-356', v: 10550 },
  27: { s: '1874', r: '178', a1: 2361, a2: '-1136', v: 13973 },
  28: { b1: '3280', b2: 3276, s: '9', r: '709', v: 17202 },
  29: { b1: '96', b2: 3688, v: 13117 },
  30: { b1: '33', b2: 3083, v: 4170 },
  31: { b1: '365', b2: 5024 },
  32: { b1: '-21', b2: 3069 },
  33: { b2: 4795 },
  34: { b2: 4589 },
  35: { b2: 5736 },
  36: { b2: 3731 },
  37: { b2: 3866 },
};

const bold = "font-['Open_Sans'] text-[14.5px] font-bold text-white";

const DomLine = ({ i }: { i: number }) => {
  const d = domRows[i] ?? {};
  const bc = 'border-r border-b border-[#06384a]';
  const rc = 'border-r border-b border-[#232c36]';
  const dc = 'border-r border-b border-[#0b353e]';
  return (
    <div
      className={clsx(
        'grid shrink-0 grid-cols-[5px_46px_46px_46px_46px_46px_46px_55px_8px] grid-rows-[100%] text-right text-[15px] leading-[18px] tracking-[-0.3px]',
        i === 0 ? 'h-[15px]' : 'h-[18px]',
      )}
    >
      <div className="border-r border-[#06384a] bg-[#76878b]">
        <div className="mt-1 h-2 w-px bg-[#2b5f7c]" />
      </div>
      <div className={clsx(bc, 'pr-[2px]', d.b1 === '3280' ? 'bg-[#003f83]' : 'bg-[#268bd5]')}>{d.b1}</div>
      <div className={clsx(bc, 'relative bg-[#268bd5] pr-[2px]')}>
        {d.b2 && <div className="absolute inset-y-0 right-px bg-[#003f83]" style={{ width: (d.b2 / 5736) * 44 }} />}
        <span className="relative">{d.b2}</span>
        {i === 38 && <span className="text-[#ffff00]">40857</span>}
      </div>
      <div className={clsx(dc, 'pr-[2px]', d.s === '9' ? bold : 'text-[#c98c85]')}>{d.s}</div>
      <div className={clsx(dc, 'pr-[2px]', d.r === '178' ? bold : 'text-[#7fc0de]')}>{d.r}</div>
      <div className={clsx(rc, 'relative bg-[#de312e] pr-[2px]')}>
        {d.a1 && <div className="absolute inset-y-0 left-0 bg-[#833d42]" style={{ width: (d.a1 / 3818) * 45 }} />}
        <span className="relative">{d.a1}</span>
        {i === 17 && <span className="text-[#ffff00]">33154</span>}
      </div>
      <div className={clsx(rc, 'pr-[2px]', d.a2 === '-1136' ? 'bg-[#833d42]' : 'bg-[#de312e]')}>{d.a2}</div>
      <div className={clsx(dc, 'relative pr-[2px] text-[#cf9490]')}>
        {d.v && <div className="absolute inset-y-0 right-px bg-[#833d42]" style={{ width: (d.v / 17202) * 54 }} />}
        <span className="relative">{d.v}</span>
      </div>
      <div className="border-b border-[#0b353e]">
        {d.v && d.v > 600 && <div className={clsx('h-full bg-[#003f83]', d.v > 4500 ? 'w-2' : 'w-[2px]')} />}
      </div>
    </div>
  );
};

const DomToolbar = () => (
  <svg width="345" height="47" viewBox="1424 0 345 47" className="block">
    <defs>
      <linearGradient id="green" x1="0" y1="0" x2="0" y2="1">
        <stop offset="0" stopColor="#9be04a" />
        <stop offset="1" stopColor="#2f8f10" />
      </linearGradient>
      <linearGradient id="lens" x1="0" y1="0" x2="1" y2="1">
        <stop offset="0" stopColor="#f2fbff" />
        <stop offset="1" stopColor="#7fc3ea" />
      </linearGradient>
    </defs>
    <path d="M1424 0h345v47h-345z" fill="#474a59" />
    <path d="M1424 0h345v8h-345z" fill="#3b3d4c" />
    <path d="M1424 0h6v47h-6z" fill="#35506c" opacity=".6" />
    <path d="M1429 16h17v19h-17z" fill="#dfe3dc" stroke="#b5bab0" />
    <path d="M1432 20h11 M1432 25h8 M1437 17v17" stroke="#b9bfb4" />
    <path d="M1441 21l7 8h-3.500v7h-7v-7h-3.500z" fill="url(#green)" stroke="#3c8a1e" strokeWidth=".7" />
    <path d="M1463 19h16v18h-16z" fill="#dfe3dc" stroke="#b5bab0" />
    <path d="M1465 24h8 M1465 29h11 M1470 20v17" stroke="#b9bfb4" />
    <path d="M1475 33l-7-8h3.500v-7h7v7h4z" fill="url(#green)" stroke="#3c8a1e" strokeWidth=".7" />
    <path d="M1502.500 19a4.500 4.500 0 0 1 9 0c0 4-2 7-3 11.500h-3c-1-4.500-3-7.500-3-11.500z" fill="#d5252c" />
    <circle cx="1507" cy="35.500" r="3.200" fill="#d5252c" />
    <path d="M1531 15h13l6.500 7v17H1531z" fill="#b6f1ef" />
    <path d="M1535 28h15 M1540 32h10 M1533 35.500h17" stroke="#16242c" strokeWidth="1.500" />
    <path d="M1533 33l4-7 7 4-4 5z" fill="#f4f8ff" />
    <path d="M1535 28l4-2.500 5 4-3 3z" fill="#1d6be0" />
    <path d="M1566 17v5 M1570 17v5" stroke="#d5d8dd" strokeWidth="1.500" />
    <path d="M1563.500 22h9v3c0 3-2 4-4.500 4s-4.500-1-4.500-4z M1567 29h2v7h-2z" fill="#a8bcd4" />
    <path d="M1568 35c-2 2-5 1-5-1" stroke="#a8bcd4" fill="none" />
    <path d="M1576 18h11v19h-11z" fill="#f2c24a" stroke="#a9741e" />
    <path d="M1576 18h11v9h-11z" fill="#f5a878" />
    <path d="M1579 16h5v2h-5z" fill="#d8b46a" />
    <path d="M1578.500 23h6 M1581.500 20v6 M1578.500 32h6" stroke="#d31f1f" strokeWidth="1.500" />
    <path d="M1601.500 36l9-10" stroke="#2f7de0" strokeWidth="4.500" strokeLinecap="round" />
    <path d="M1601.500 36l9-10" stroke="#b5d6fb" strokeWidth="1.800" strokeLinecap="round" />
    <path d="M1619 21a6 6 0 1 1-6-4.500l-2.500 4 1.500 3 3 .5z" fill="#8cc0f7" stroke="#2a6fd0" strokeWidth=".8" />
    <text x="1643" y="36.500" textAnchor="middle" fontSize="28" fontWeight="700" fontFamily="'Liberation Sans', Arial, sans-serif" fill="#21a7d3">S</text>
    <path d="M1643 15v3 M1643 36v3" stroke="#21a7d3" strokeWidth="2.500" />
    <ellipse cx="1674" cy="21.500" rx="8" ry="6" fill="#3f8fe6" />
    <ellipse cx="1673" cy="19" rx="5.500" ry="2.500" fill="#b9dcff" opacity=".7" />
    <path d="M1670 26l-1 4 5-3z" fill="#3f8fe6" />
    <path d="M1669 22h2 M1673 22h2" stroke="#fff" strokeWidth="1.500" />
    <ellipse cx="1680" cy="28.500" rx="8.500" ry="6.500" fill="#4dbb3c" />
    <ellipse cx="1679" cy="26" rx="5.500" ry="2.500" fill="#cbf5bb" opacity=".7" />
    <path d="M1683 33l4 4-7-2z" fill="#4dbb3c" />
    <path d="M1675 29h2 M1679 29h2 M1683 29h2" stroke="#fff" strokeWidth="1.500" />
    <path d="M1703.500 17v20" stroke="#2b2bd0" strokeWidth="1.500" />
    <path d="M1699 36.500h21" stroke="#b3222c" strokeWidth="1.500" />
    <path d="M1701 20l2.500-4 2.500 4" stroke="#2b2bd0" fill="none" />
    <path d="M1705 31l4-7 4 4 8-9" stroke="#7a4099" strokeWidth="1.300" fill="none" />
    <path d="M1717 30l4 4 M1721 30l-4 4" stroke="#b3222c" />
    <path d="M1736 37l7-7" stroke="#8fa3e0" strokeWidth="4" strokeLinecap="round" />
    <circle cx="1749.500" cy="22.500" r="7.500" fill="url(#lens)" stroke="#c9d3dc" strokeWidth="1.500" />
  </svg>
);

const Digits = ({ value, className }: { value: string; className: string }) => (
  <div className={clsx('absolute inset-x-0 flex flex-col text-center text-[15px] leading-[17px] font-light text-white', className)}>
    {value.split('').map((c, i) => (
      <div key={i} className="h-[17px]">
        {c}
      </div>
    ))}
  </div>
);

const Ticks = ({ short, long }: { short: string; long: string }) => (
  <>
    <div className={clsx('absolute -top-px left-0 h-px bg-black', long)} />
    <div className={clsx('absolute top-[124px] left-0 h-px bg-black', short)} />
    <div className={clsx('absolute top-[249px] left-0 h-px bg-black', long)} />
    <div className={clsx('absolute top-[374px] left-0 h-px bg-black', short)} />
    <div className="absolute top-[498px] left-0 h-px w-full bg-black" />
    <div className={clsx('absolute top-[623px] left-0 h-px bg-black', short)} />
    <div className={clsx('absolute top-[748px] left-0 h-px bg-black', long)} />
    <div className={clsx('absolute top-[873px] left-0 h-px bg-black', short)} />
  </>
);

const HeatBar = ({ className, children }: { className: string; children: ReactNode }) => (
  <div className={clsx('relative flex h-[973px] flex-col overflow-hidden border-x border-t border-[#0d3340]', className)}>{children}</div>
);

const HeatPanel = () => (
  <div className="w-[147px] bg-[#434655] font-['Noto_Sans_CJK_JP',sans-serif]">
    <div className="h-[14px] bg-[#3b3d4c]" />
    <div className="mr-px h-[6px] bg-white" />
    <div className="flex h-[25px] gap-1 pt-px pl-[2px] font-['Liberation_Sans'] text-[11px] text-white">
      <div className="flex h-[21px] w-[21px] items-center justify-center border-2 border-[#dedede] bg-[#ff0000]">X</div>
      <div className="flex h-[21px] w-[22px] items-center justify-center border-2 border-[#dedede] bg-[#4169e1]">R</div>
      <div className="flex h-[21px] w-[22px] items-center justify-center border-2 border-[#0078d7] bg-[#dedede]">
        <div className="flex h-[16px] w-[16px] items-center justify-center bg-[#32cd32]">T</div>
      </div>
    </div>
    <div className="flex gap-[3px] pl-[2px]">
      <HeatBar className="w-[46px]">
        <div className="h-[546px] bg-linear-[145deg] from-white to-[#db302d]" />
        <div className="grow bg-linear-[145deg] from-[#258ad3] to-[#f8fbfd]" />
        <Ticks short="w-[11px]" long="w-[29px]" />
        <Digits value="68583" className="top-[445px]" />
        <Digits value="56538" className="top-[564px]" />
      </HeatBar>
      <HeatBar className="w-[46px]">
        <div className="h-[474px] bg-linear-[145deg] from-[#7a7a7a] to-[#db302d]" />
        <div className="grow bg-linear-[145deg] from-[#258ad3] to-[#787679]" />
        <Ticks short="w-[13px]" long="w-[31px]" />
        <Digits value="16483" className="top-[373px]" />
        <Digits value="18161" className="top-[492px]" />
      </HeatBar>
      <HeatBar className="w-[46px]">
        <div className="h-[40px] bg-linear-[145deg] from-[#303030] to-[#db302d]" />
        <div className="grow bg-linear-[145deg] from-[#258ad3] to-[#303030]" />
        <Ticks short="w-[13px]" long="w-[31px]" />
        <Digits value="30" className="-top-[10px]" />
        <Digits value="5341" className="top-[58px]" />
      </HeatBar>
    </div>
  </div>
);

const App = () => (
  <div className="flex h-[1018px] w-[1916px] overflow-hidden bg-[#131417]">
    <div className="w-[1424px] shrink-0">
      <TopBar />
      <div className="-mt-px flex h-[931px]">
        <div className="w-[843px] border-l-[5px] border-[#2d2d33] bg-[#2d2d2f]">
          <div className="flex h-[7px] items-center">
            <div className="ml-[18px] h-[3px] w-[281px] bg-[#c0cad9]" />
            <div className="ml-[436px] h-[3px] w-[30px] bg-black" />
            <div className="ml-5 h-[3px] w-[30px] bg-[#f4f6fa]" />
          </div>
          <ChartToolbars />
          <div className="flex h-[874px]">
            <SideTools />
            <Chart />
          </div>
        </div>
        <Matrix />
      </div>
      <StatusBar />
    </div>
    <div className="w-[345px] shrink-0 bg-[#3b3d4c]">
      <DomToolbar />
      <div className="relative flex h-[967px] flex-col overflow-hidden border-l border-[#6b7486] bg-[#002b36] font-[Roboto] text-white">
        {Array.from({ length: 54 }, (_, i) => (
          <DomLine key={i} i={i} />
        ))}
        <div className="absolute top-[463px] left-0 h-[2px] w-full bg-[#f5dada]" />
      </div>
    </div>
    <HeatPanel />
  </div>
);

export default App;
